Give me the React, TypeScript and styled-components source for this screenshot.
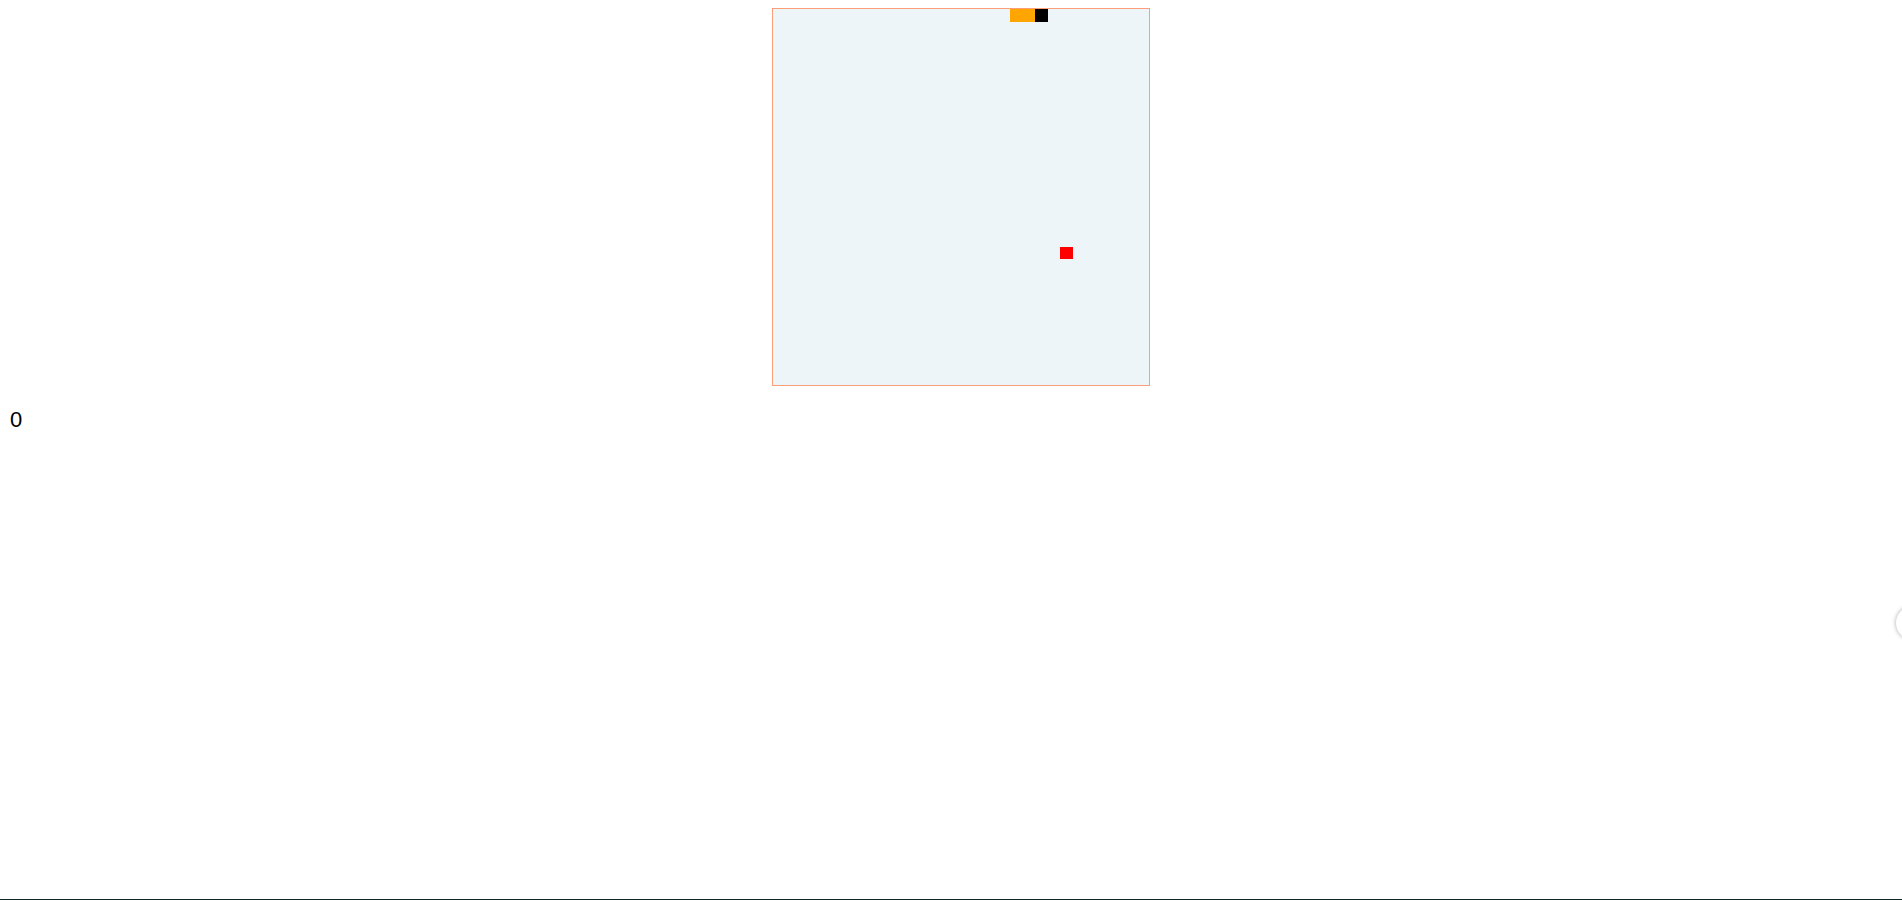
import React from "react";
import styled, { createGlobalStyle } from "styled-components";

const GlobalStyle = createGlobalStyle`
  html, body {
    margin: 0;
    padding: 0;
    background: #ffffff;
    font-family: "Liberation Sans", Arial, sans-serif;
    overflow: hidden;
  }
`;

const Page = styled.div`
  position: relative;
  width: 1902px;
  height: 900px;
  box-sizing: border-box;
  padding-top: 8px;
  display: flex;
  flex-direction: column;
`;

const BoardRow = styled.div`
  display: flex;
  justify-content: center;
  padding-left: 19px;
`;

const Board = styled.div`
  display: grid;
  grid-template-columns: repeat(30, 12.5px);
  grid-template-rows: repeat(30, 12.5px);
  align-content: start;
  width: 376px;
  height: 376px;
  background: #eef5f9;
  border: 1px solid #ff9f7a;
`;

const Cell = styled.div<{ $col: number; $row: number; $color: string }>`
  grid-column: ${(p) => p.$col};
  grid-row: ${(p) => p.$row};
  background: ${(p) => p.$color};
`;

const Score = styled.div`
  margin-top: 21px;
  padding-left: 10px;
  font-size: 22px;
  color: #000;
`;

const EdgeCircle = styled.div`
  position: absolute;
  left: 1896px;
  top: 606px;
  width: 34px;
  height: 34px;
  border-radius: 50%;
  background: #fff;
  box-shadow: 0 0 4px rgba(0, 0, 0, 0.35);
`;

const BottomLine = styled.div`
  position: absolute;
  left: 0;
  right: 0;
  bottom: 0;
  height: 1px;
  background: #0c2a25;
`;

const snake = [
  { col: 20, row: 1, color: "orange" },
  { col: 21, row: 1, color: "orange" },
  { col: 22, row: 1, color: "#000" },
];

export default function App() {
  return (
    <>
      <GlobalStyle />
      <Page>
        <BoardRow>
          <Board>
            {snake.map((s, i) => (
              <Cell key={i} $col={s.col} $row={s.row} $color={s.color} />
            ))}
            <Cell $col={24} $row={20} $color="red" />
          </Board>
        </BoardRow>
        <Score>0</Score>
        <EdgeCircle />
        <BottomLine />
      </Page>
    </>
  );
}
